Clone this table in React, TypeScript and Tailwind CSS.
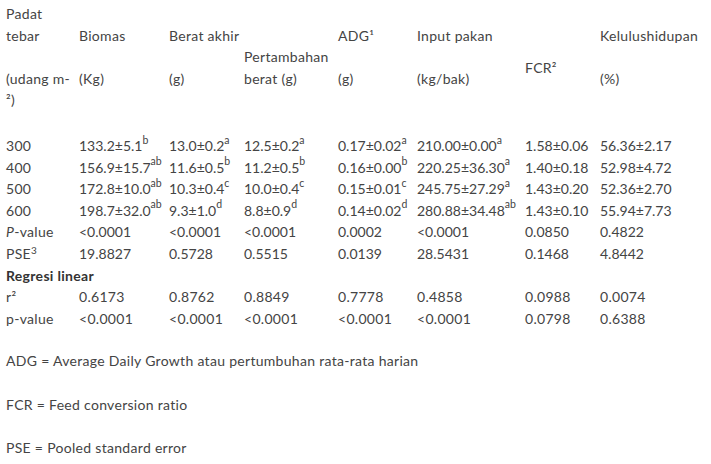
const COLS = 'grid grid-cols-[73px_90px_75px_94px_79px_108px_75px_1fr]'

type Cell = { v: string; s?: string }

const ROWS: { label: React.ReactNode; cells: Cell[] }[] = [
  {
    label: '300',
    cells: [
      { v: '133.2±5.1', s: 'b' },
      { v: '13.0±0.2', s: 'a' },
      { v: '12.5±0.2', s: 'a' },
      { v: '0.17±0.02', s: 'a' },
      { v: '210.00±0.00', s: 'a' },
      { v: '1.58±0.06' },
      { v: '56.36±2.17' },
    ],
  },
  {
    label: '400',
    cells: [
      { v: '156.9±15.7', s: 'ab' },
      { v: '11.6±0.5', s: 'b' },
      { v: '11.2±0.5', s: 'b' },
      { v: '0.16±0.00', s: 'b' },
      { v: '220.25±36.30', s: 'a' },
      { v: '1.40±0.18' },
      { v: '52.98±4.72' },
    ],
  },
  {
    label: '500',
    cells: [
      { v: '172.8±10.0', s: 'ab' },
      { v: '10.3±0.4', s: 'c' },
      { v: '10.0±0.4', s: 'c' },
      { v: '0.15±0.01', s: 'c' },
      { v: '245.75±27.29', s: 'a' },
      { v: '1.43±0.20' },
      { v: '52.36±2.70' },
    ],
  },
  {
    label: '600',
    cells: [
      { v: '198.7±32.0', s: 'ab' },
      { v: '9.3±1.0', s: 'd' },
      { v: '8.8±0.9', s: 'd' },
      { v: '0.14±0.02', s: 'd' },
      { v: '280.88±34.48', s: 'ab' },
      { v: '1.43±0.10' },
      { v: '55.94±7.73' },
    ],
  },
  {
    label: (
      <>
        <i>P</i>-value
      </>
    ),
    cells: ['<0.0001', '<0.0001', '<0.0001', '0.0002', '<0.0001', '0.0850', '0.4822'].map((v) => ({ v })),
  },
  {
    label: (
      <>
        PSE<sup className="text-[10px]">3</sup>
      </>
    ),
    cells: ['19.8827', '0.5728', '0.5515', '0.0139', '28.5431', '0.1468', '4.8442'].map((v) => ({ v })),
  },
]

const REG: { label: string; cells: string[] }[] = [
  { label: 'r²', cells: ['0.6173', '0.8762', '0.8849', '0.7778', '0.4858', '0.0988', '0.0074'] },
  { label: 'p-value', cells: ['<0.0001', '<0.0001', '<0.0001', '<0.0001', '<0.0001', '0.0798', '0.6388'] },
]

function Value({ v, s }: Cell) {
  return (
    <div className="whitespace-nowrap tracking-normal">
      {v}
      {s && <sup className="text-[10.5px] -top-[0.7em]">{s}</sup>}
    </div>
  )
}

export default function App() {
  return (
    <div className="min-h-[464px] w-[711px] bg-white pl-[6px] pt-[3px] text-[14px] leading-[21.6px] tracking-[0.3px] text-[#444] font-['Lato',sans-serif]">
      {/* Header */}
      <div className={`${COLS} items-center`}>
        <div>
          Padat
          <br />
          tebar
          <br />
          <br />
          (udang m-
          <br />
          ²)
        </div>
        <div>
          Biomas
          <br />
          <br />
          (Kg)
        </div>
        <div>
          Berat akhir
          <br />
          <br />
          (g)
        </div>
        <div>
          <br />
          Pertambahan
          <br />
          berat (g)
        </div>
        <div>
          ADG¹
          <br />
          <br />
          (g)
        </div>
        <div>
          Input pakan
          <br />
          <br />
          (kg/bak)
        </div>
        <div>
          <br />
          FCR²
        </div>
        <div>
          Kelulushidupan
          <br />
          <br />
          (%)
        </div>
      </div>

      {/* Body */}
      <div className="mt-[24px]">
        {ROWS.map((r, i) => (
          <div key={i} className={COLS}>
            <div>{r.label}</div>
            {r.cells.map((c, j) => (
              <Value key={j} {...c} />
            ))}
          </div>
        ))}
        <div className="font-bold text-[#333]">Regresi linear</div>
        {REG.map((r) => (
          <div key={r.label} className={COLS}>
            <div>{r.label}</div>
            {r.cells.map((c, j) => (
              <div key={j}>{c}</div>
            ))}
          </div>
        ))}
      </div>

      {/* Notes */}
      <div className="mt-[21px] flex flex-col gap-[21.6px]">
        <p>ADG = Average Daily Growth atau pertumbuhan rata-rata harian</p>
        <p>FCR = Feed conversion ratio</p>
        <p>PSE = Pooled standard error</p>
      </div>
    </div>
  )
}
